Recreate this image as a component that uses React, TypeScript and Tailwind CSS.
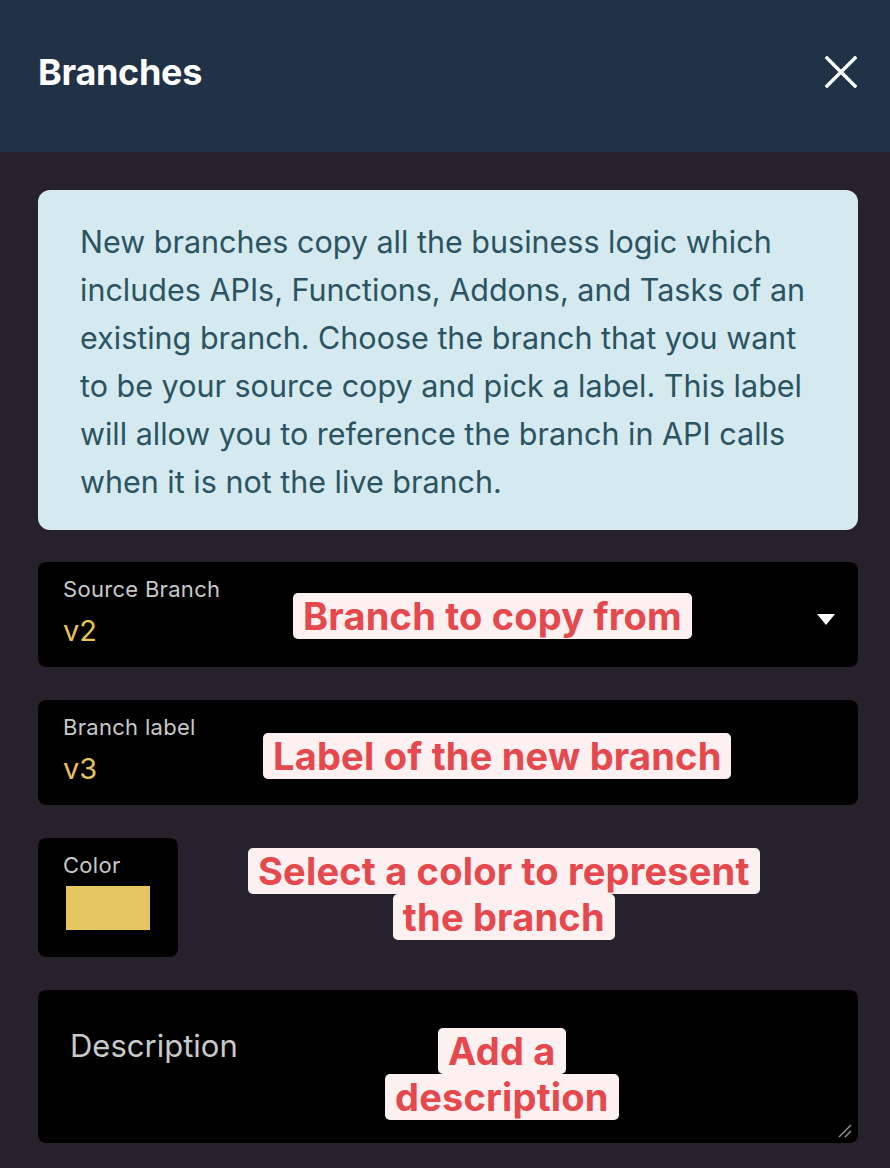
import { useState } from 'react';

function Callout({ lines, className }: { lines: string[]; className: string }) {
  return (
    <div className={`absolute flex flex-col items-center pointer-events-none ${className}`}>
      {lines.map((line) => (
        <span
          key={line}
          className="inline-block h-[46px] px-[10px] rounded-[5px] bg-[#fcf0f1] text-[#e5484d] text-[38px] leading-[46px] font-bold tracking-[0.2px] whitespace-nowrap"
        >
          {line}
        </span>
      ))}
    </div>
  );
}

function Field({ label, value }: { label: string; value: string }) {
  return (
    <div className="flex flex-col pt-[13px]">
      <span className="text-[22px] leading-[28px] tracking-[0.3px] text-[#c9c9c9]">{label}</span>
      <span className="text-[29px] leading-[40px] text-[#e6c35c] mt-[8px]">{value}</span>
    </div>
  );
}

export default function App() {
  const [description, setDescription] = useState('');

  return (
    <div className="min-h-[1168px] flex flex-col bg-[#27212e] font-['Inter','Liberation_Sans',sans-serif]">
      {/* header */}
      <div className="h-[152px] shrink-0 flex items-center justify-between pl-[38px] pr-[33px] pb-[8px] bg-[#213247]">
        <h1 className="text-[36px] font-bold text-white tracking-[-0.3px]">Branches</h1>
        <button className="w-[32px] h-[32px] flex items-center justify-center text-white">
          <svg width="32" height="32" viewBox="0 0 32 32" fill="none" stroke="currentColor" strokeWidth="3.4" strokeLinecap="square">
            <path d="M2 2 L30 30 M30 2 L2 30" />
          </svg>
        </button>
      </div>

      <div className="flex-1 flex flex-col pl-[38px] pr-[32px] pt-[38px] pb-[24px] gap-[33px]">
        {/* info */}
        <div className="rounded-[12px] bg-[#d5eaef] pl-[42px] pr-[40px] pt-[28px] pb-[24px] -mb-px">
          <p className="text-[30.5px] leading-[48px] text-[#2a5462]">
            New branches copy all the business logic which includes APIs, Functions, Addons, and Tasks of an
            existing branch. Choose the branch that you want to be your source copy and pick a label. This label
            will allow you to reference the branch in API calls when it is not the live branch.
          </p>
        </div>

        {/* source branch */}
        <div className="relative h-[105px] rounded-[8px] bg-black pl-[25px] pr-[23px] flex items-start">
          <div className="flex-1">
            <Field label="Source Branch" value="v2" />
          </div>
          <svg width="18" height="11" viewBox="0 0 18 11" className="mt-[52px] text-white">
            <path d="M0 0 H18 L9 11 Z" fill="currentColor" />
          </svg>
          <Callout lines={['Branch to copy from']} className="left-[255px] top-[31px]" />
        </div>

        {/* branch label */}
        <div className="relative h-[105px] rounded-[8px] bg-black pl-[25px]">
          <Field label="Branch label" value="v3" />
          <Callout lines={['Label of the new branch']} className="left-[225px] top-[33px]" />
        </div>

        {/* color */}
        <div className="relative">
          <div className="w-[140px] h-[119px] rounded-[8px] bg-black pl-[25px] pt-[13px] flex flex-col">
            <span className="text-[22px] leading-[28px] tracking-[0.3px] text-[#c9c9c9]">Color</span>
            <div className="w-[84px] h-[44px] ml-[3px] mt-[7px] bg-[#e5c55f]" />
          </div>
          <Callout lines={['Select a color to represent', 'the branch']} className="left-[210px] top-[10px]" />
        </div>

        {/* description */}
        <div className="relative h-[153px]">
          <textarea
            value={description}
            onChange={(e) => setDescription(e.target.value)}
            placeholder="Description"
            className="w-full h-full block resize-none rounded-[8px] bg-black pt-[36px] px-[32px] text-[31px] leading-[40px] text-[#e6e6e6] placeholder:text-[#c9c9c9] outline-none"
          />
          <svg width="14" height="14" viewBox="0 0 14 14" className="absolute right-[6px] bottom-[5px] text-[#9a9a9a]">
            <path d="M1 13 L13 1 M7 13 L13 7" stroke="currentColor" strokeWidth="1.4" />
          </svg>
          <Callout lines={['Add a', 'description']} className="left-[347px] top-[38px]" />
        </div>
      </div>
    </div>
  );
}
